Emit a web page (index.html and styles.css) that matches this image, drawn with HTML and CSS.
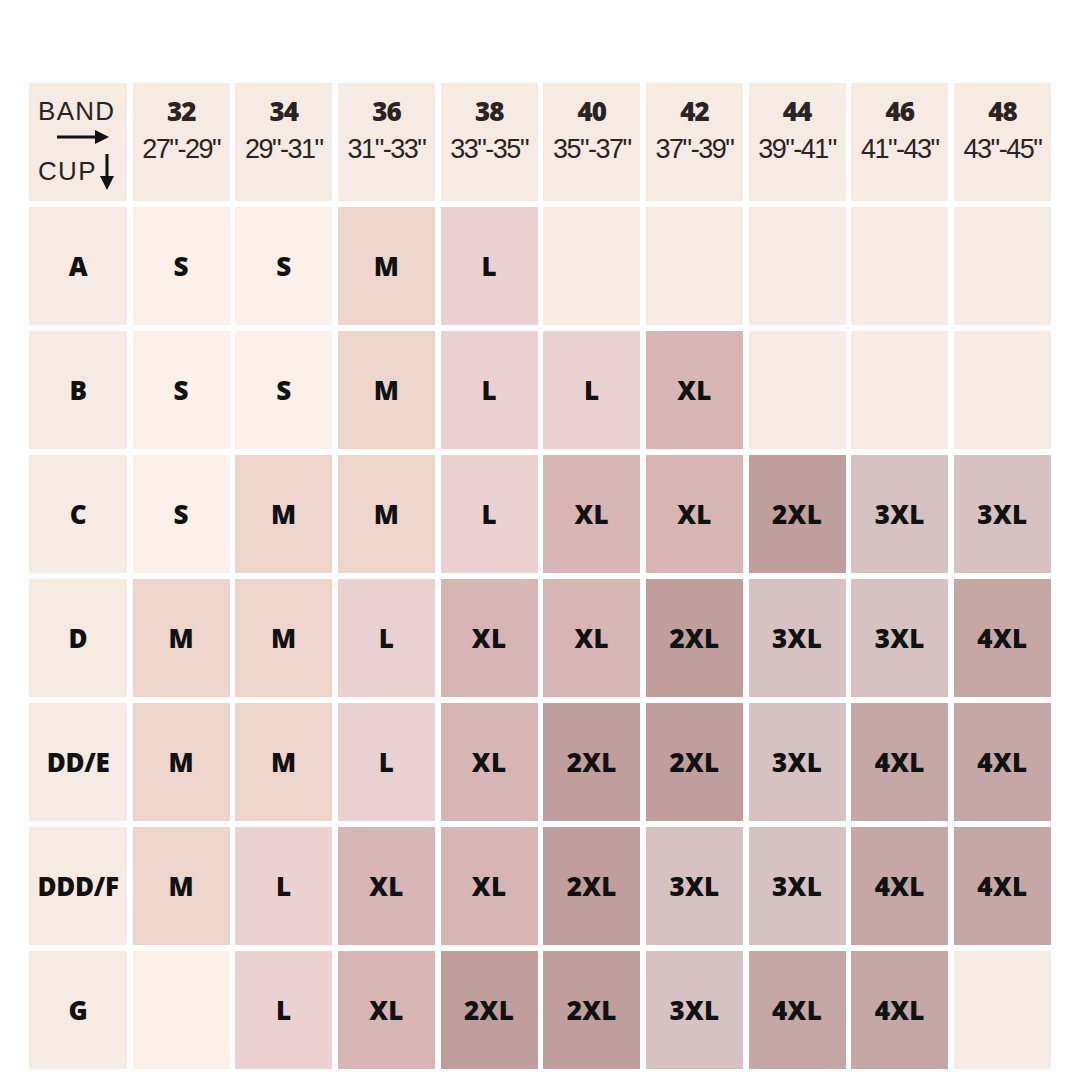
FILE: index.html
```html
<!DOCTYPE html>
<html>
<head>
<meta charset="utf-8">
<link rel="stylesheet" href="styles.css">
</head>
<body>
<div class="chart">
  <div class="cell corner">
    <div class="band">BAND</div>
    <svg class="arrow-r" width="52" height="14" viewBox="0 0 52 14"><line x1="0" y1="7" x2="40" y2="7" stroke="#111" stroke-width="3"/><polygon points="38,0 52,7 38,14" fill="#111"/></svg>
    <div class="cup">CUP<svg class="arrow-d" width="14" height="36" viewBox="0 0 14 36"><line x1="7" y1="0" x2="7" y2="24" stroke="#111" stroke-width="3"/><polygon points="0,22 14,22 7,36" fill="#111"/></svg></div>
  </div>
  <div class="cell head"><b>32</b><span>27"-29"</span></div>
  <div class="cell head"><b>34</b><span>29"-31"</span></div>
  <div class="cell head"><b>36</b><span>31"-33"</span></div>
  <div class="cell head"><b>38</b><span>33"-35"</span></div>
  <div class="cell head"><b>40</b><span>35"-37"</span></div>
  <div class="cell head"><b>42</b><span>37"-39"</span></div>
  <div class="cell head"><b>44</b><span>39"-41"</span></div>
  <div class="cell head"><b>46</b><span>41"-43"</span></div>
  <div class="cell head"><b>48</b><span>43"-45"</span></div>

  <div class="cell cup-l">A</div>
  <div class="cell s">S</div><div class="cell s">S</div><div class="cell m">M</div><div class="cell l">L</div><div class="cell e"></div><div class="cell e"></div><div class="cell e"></div><div class="cell e"></div><div class="cell e"></div>

  <div class="cell cup-l">B</div>
  <div class="cell s">S</div><div class="cell s">S</div><div class="cell m">M</div><div class="cell l">L</div><div class="cell l">L</div><div class="cell xl">XL</div><div class="cell e"></div><div class="cell e"></div><div class="cell e"></div>

  <div class="cell cup-l">C</div>
  <div class="cell s">S</div><div class="cell m">M</div><div class="cell m">M</div><div class="cell l">L</div><div class="cell xl">XL</div><div class="cell xl">XL</div><div class="cell x2">2XL</div><div class="cell x3">3XL</div><div class="cell x3">3XL</div>

  <div class="cell cup-l">D</div>
  <div class="cell m">M</div><div class="cell m">M</div><div class="cell l">L</div><div class="cell xl">XL</div><div class="cell xl">XL</div><div class="cell x2">2XL</div><div class="cell x3">3XL</div><div class="cell x3">3XL</div><div class="cell x4">4XL</div>

  <div class="cell cup-l">DD/E</div>
  <div class="cell m">M</div><div class="cell m">M</div><div class="cell l">L</div><div class="cell xl">XL</div><div class="cell x2">2XL</div><div class="cell x2">2XL</div><div class="cell x3">3XL</div><div class="cell x4">4XL</div><div class="cell x4">4XL</div>

  <div class="cell cup-l">DDD/F</div>
  <div class="cell m">M</div><div class="cell l">L</div><div class="cell xl">XL</div><div class="cell xl">XL</div><div class="cell x2">2XL</div><div class="cell x3">3XL</div><div class="cell x3">3XL</div><div class="cell x4">4XL</div><div class="cell x4">4XL</div>

  <div class="cell cup-l">G</div>
  <div class="cell s"></div><div class="cell l">L</div><div class="cell xl">XL</div><div class="cell x2">2XL</div><div class="cell x2">2XL</div><div class="cell x3">3XL</div><div class="cell x4">4XL</div><div class="cell x4">4XL</div><div class="cell e"></div>
</div>
</body>
</html>
```

FILE: styles.css
```css
html, body {
  margin: 0;
  padding: 0;
  background: #ffffff;
}

body {
  padding: 83px 0 0 29px;
  font-family: "Open Sans", "Liberation Sans", sans-serif;
}

.chart {
  display: grid;
  grid-template-columns: 98px repeat(9, 97px);
  grid-auto-rows: 118.3px;
  column-gap: 5.67px;
  row-gap: 5.67px;
  width: 1022px;
}

.cell {
  display: flex;
  align-items: center;
  justify-content: center;
  font-weight: 800;
  font-size: 26px;
  letter-spacing: 0.3px;
  color: #111;
}

.cup-l {
  letter-spacing: -0.3px;
}

.head {
  background: #f5ebe3;
  flex-direction: column;
  justify-content: flex-start;
  padding-top: 13px;
  box-sizing: border-box;
  color: #2a2321;
}

.head b {
  font-size: 26px;
  font-weight: 800;
  line-height: 30px;
  letter-spacing: -1px;
}

.head span {
  font-family: "Liberation Sans", sans-serif;
  font-weight: 400;
  font-size: 27px;
  line-height: 30px;
  margin-top: 8px;
  letter-spacing: -1.5px;
  color: #2a2321;
}

.corner {
  background: #f5ebe3;
  flex-direction: column;
  justify-content: flex-start;
  align-items: flex-start;
  padding: 13px 0 0 9px;
  box-sizing: border-box;
  font-family: "Liberation Sans", sans-serif;
  font-weight: 400;
  color: #2a2321;
}

.band {
  font-size: 26px;
  line-height: 30px;
  letter-spacing: 1.3px;
}

.arrow-r {
  display: block;
  margin: 4px 0 0 19px;
}

.cup {
  display: flex;
  align-items: flex-start;
  font-size: 26px;
  line-height: 30px;
  margin-top: 12px;
  letter-spacing: 1.3px;
}

.arrow-d {
  display: block;
  margin: -2px 0 0 3px;
}

.cup-l { background: #f5ebe3; }
.e { background: #f5ebe3; }
.s { background: #fbf1ea; }
.m { background: #edd5cc; }
.l { background: #ecd1d2; }
.xl { background: #d8b5b5; }
.x2 { background: #c09e9c; }
.x3 { background: #d6c1c3; }
.x4 { background: #c5a7a6; }
```
